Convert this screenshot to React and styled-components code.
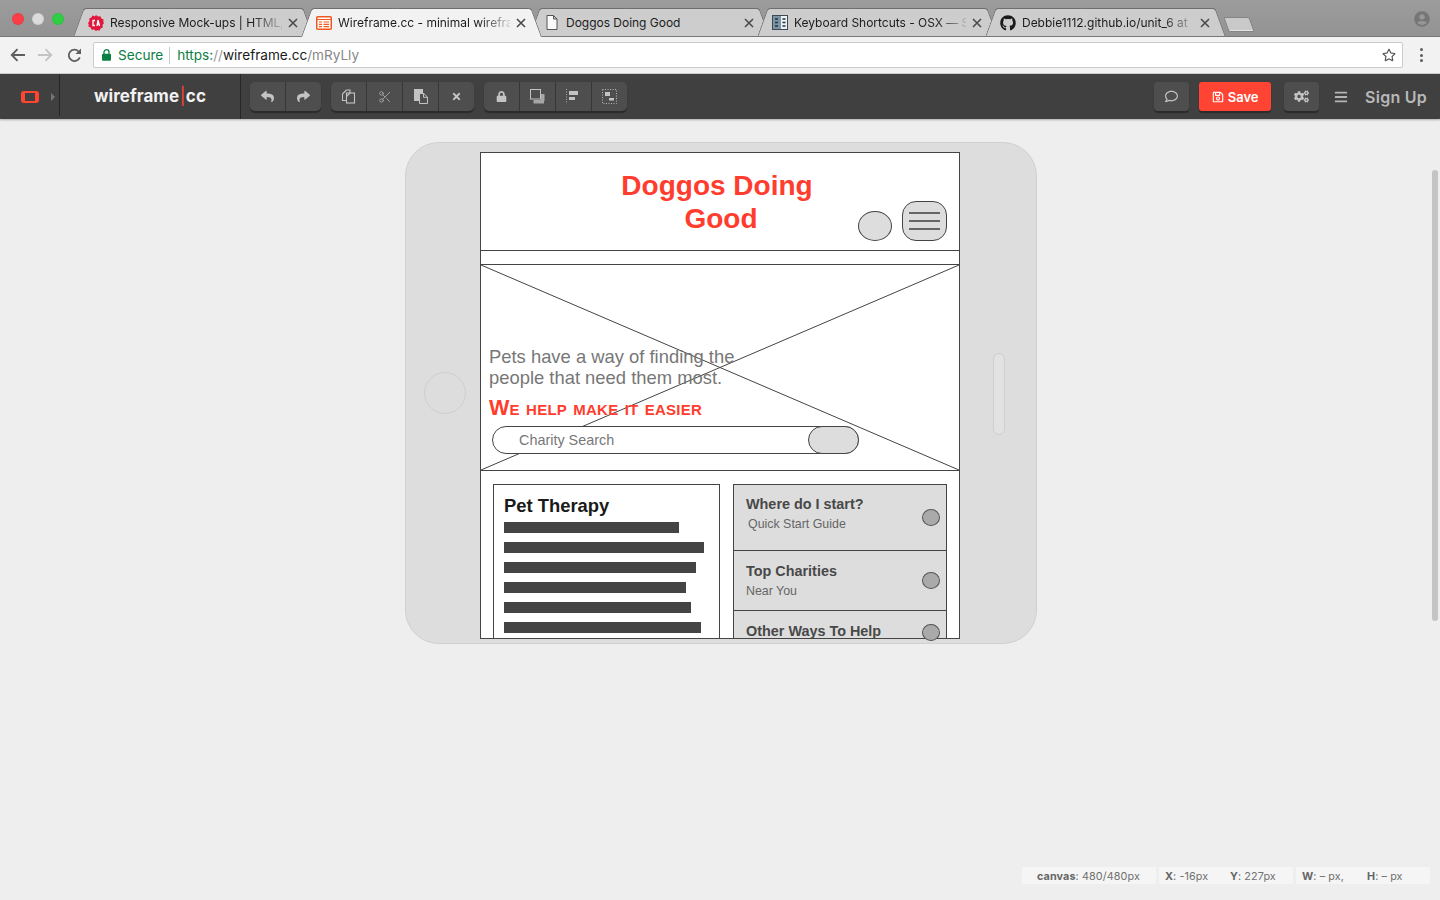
import React from "react";
import styled, { createGlobalStyle } from "styled-components";
import { FaGithub, FaRegSave } from "react-icons/fa";
import {
  FaReply, FaShare, FaTimes, FaLock, FaCogs, FaBars, FaRegComment,
  FaUserCircle, FaRegStar,
} from "react-icons/fa";
import { Scissors } from "lucide-react";

const Global = createGlobalStyle`
  html, body { margin: 0; padding: 0; height: 100%; overflow: hidden; background: #eeeeee; }
  * { box-sizing: border-box; }
`;

const Page = styled.div`
  width: 1440px; height: 900px; display: flex; flex-direction: column; position: relative;
  overflow: hidden; background: #eeeeee; font-family: Inter, "Liberation Sans", sans-serif;
`;

/* ---------- browser tab strip ---------- */
const TabStrip = styled.div`
  height: 37px; flex: none; display: flex; align-items: flex-end; position: relative;
  background: linear-gradient(#9c9c9c, #939393); border-bottom: 1px solid #777;
`;
const Lights = styled.div`
  width: 73px; height: 36px; flex: none; display: flex; gap: 8px; padding: 13px 0 0 12px;
`;
const Light = styled.span`
  width: 12px; height: 12px; border-radius: 50%; background: ${(p) => p.$c};
  box-shadow: inset 0 0 0 1px rgba(0,0,0,.06);
`;
const Tab = styled.div`
  width: 241px; height: 29px; margin-right: -13px; margin-bottom: -1px; position: relative; flex: none;
  display: flex; align-items: center; padding: 0 14px 0 15px;
  z-index: ${(p) => (p.$active ? 5 : 1)};
  &::before, &::after {
    content: ""; position: absolute; top: 0; bottom: 0; width: 55%; z-index: -1;
    background: ${(p) => (p.$active ? "#f2f2f2" : "#cdcdcd")};
    border-top: 1px solid #6e6e6e;
    border-bottom: ${(p) => (p.$active ? "none" : "1px solid #777")};
  }
  &::before {
    left: 0; transform-origin: bottom left; transform: skewX(-20deg);
    border-left: 1px solid #6e6e6e; border-top-left-radius: 3px;
  }
  &::after {
    right: 0; transform-origin: bottom right; transform: skewX(20deg);
    border-right: 1px solid #6e6e6e; border-top-right-radius: 3px;
  }
`;
const Favicon = styled.span`
  width: 16px; height: 16px; flex: none; display: flex; align-items: center; justify-content: center;
  margin-right: 6px;
  svg { display: block; }
`;
const TabTitle = styled.span`
  flex: 1; min-width: 0; white-space: nowrap; font-size: 12px; line-height: 16px;
  color: #1c1c1c; letter-spacing: -.02px;
  mask-image: ${(p) => (p.$fade ? "linear-gradient(90deg, #000 82%, rgba(0,0,0,.15) 100%)" : "none")};
`;
const TabClose = styled.span`
  width: 14px; height: 14px; flex: none; margin-left: 4px; color: #4a4a4a;
  display: flex; align-items: center; justify-content: center;
`;
const NewTab = styled.div`
  width: 26px; height: 15px; margin: 0 0 4px 13px; flex: none; background: #c9c9c9;
  border: 1px solid #858585; border-radius: 2px; transform: skewX(20deg); box-shadow: inset 0 -1px 0 #e4e4e4;
`;
const Profile = styled.div`
  position: absolute; right: 10px; top: 11px; color: #767676; display: flex;
`;

/* ---------- address bar ---------- */
const AddressRow = styled.div`
  height: 37px; flex: none; display: flex; align-items: center; background: #f2f2f2; padding-left: 9px;
  border-bottom: 1px solid #d0d0d0;
`;
const NavButton = styled.span`
  width: 18px; height: 18px; display: flex; align-items: center; justify-content: center;
  margin-right: ${(p) => p.$mr || 10}px; color: ${(p) => (p.$off ? "#c4c4c4" : "#5e5e5e")};
`;
const Omnibox = styled.div`
  width: 1310px; height: 26px; margin-left: -4px; background: #fff; border: 1px solid #cbcbcb; border-radius: 2px;
  display: flex; align-items: center; padding: 0 6px 0 8px; font-size: 13.6px; line-height: 17px; letter-spacing: -.01px;
`;
const Secure = styled.span` color: #0b8043; margin-left: 7px; padding-right: 6px; border-right: 1px solid #c8c8c8; `;
const Url = styled.span` margin-left: 7px; color: #888; white-space: nowrap; `;
const UrlScheme = styled.span` color: #0b8043; `;
const UrlSlash = styled.span` color: #9a9a9a; `;
const UrlHost = styled.span` color: #1a1a1a; `;
const StarSlot = styled.span` margin-left: auto; color: #555; display: flex; `;
const Kebab = styled.div`
  margin-left: 17px; display: flex; flex-direction: column; gap: 2.5px;
  span { width: 3px; height: 3px; border-radius: 50%; background: #5e5e5e; }
`;

/* ---------- app toolbar ---------- */
const Toolbar = styled.div`
  height: 45px; flex: none; display: flex; align-items: center; background: #404040;
  box-shadow: 0 1px 2px rgba(0,0,0,.28); color: #ccc; position: relative;
`;
const DeviceCell = styled.div`
  width: 60px; height: 42px; align-self: flex-start; flex: none; display: flex; align-items: center; padding: 3px 0 0 21px; gap: 12px;
  border-right: 1px solid #262626;
`;
const Caret = styled.span`
  width: 0; height: 0; border-left: 4px solid #777; border-top: 4px solid transparent; border-bottom: 4px solid transparent;
`;
const LogoCell = styled.div`
  width: 181px; height: 45px; flex: none; display: flex; align-items: center; padding: 0 0 1px 34px;
  border-right: 1px solid #262626; font-size: 17px; font-weight: 700; color: #f1f1f1; letter-spacing: .05px;
`;
const LogoBar = styled.span` color: #ff4530; font-weight: 400; margin: 0 .5px; `;
const Group = styled.div`
  display: flex; height: 29px; margin-left: ${(p) => p.$ml}px; border-radius: 5px; background: #4e4e4e;
  box-shadow: 0 2px 1px #2b2b2b; overflow: hidden;
`;
const ToolButton = styled.div`
  width: 36px; display: flex; align-items: center; justify-content: center; color: #c3c3c3;
  border-left: 1px solid #373737;
  &:first-child { border-left: none; width: 35px; }
`;
const RightTools = styled.div` margin-left: auto; display: flex; align-items: center; `;
const SoloButton = styled.div`
  width: 35px; height: 29px; border-radius: 4px; background: #4e4e4e; box-shadow: 0 2px 1px #2b2b2b;
  display: flex; align-items: center; justify-content: center; color: #c3c3c3;
`;
const SaveButton = styled.div`
  width: 72px; height: 29px; margin: 0 13px 0 10px; border-radius: 3px; background: #ff4433; color: #fff; font-size: 13px;
  font-weight: 600; display: flex; align-items: center; justify-content: center; gap: 4px; box-shadow: 0 2px 1px #2b2b2b;
`;
const MenuSlot = styled.span` margin-left: 15px; color: #b4b4b4; display: flex; `;
const SignUp = styled.span` margin: 0 13px 0 17px; font-size: 16px; font-weight: 600; color: #b8b8b8; letter-spacing: .25px; `;

/* ---------- workspace ---------- */
const Workspace = styled.div` flex: 1; min-height: 0; display: flex; flex-direction: column; padding: 23px 10px 16px 405px; `;
const Phone = styled.div`
  width: 632px; height: 502px; flex: none; position: relative; background: #dddddd; border: 1px solid #d0d0d0;
  border-radius: 34px; padding: 9px 0 0 74px;
`;
const HomeButton = styled.div`
  position: absolute; left: 18px; top: 229px; width: 42px; height: 42px; border-radius: 50%; border: 1px solid #cfcfcf;
`;
const SidePill = styled.div`
  position: absolute; left: 587px; top: 210px; width: 12px; height: 82px; border-radius: 6px; border: 1px solid #cfcfcf; background: #e2e2e2;
`;
const Canvas = styled.div` width: 480px; height: 487px; position: relative; `;
const Clip = styled.div`
  width: 480px; height: 487px; background: #fff; border: 1px solid #444; overflow: hidden; display: flex; flex-direction: column;
  font-family: "Liberation Sans", Arial, sans-serif;
`;
const Header = styled.div` height: 98px; flex: none; border-bottom: 1px solid #444; position: relative; display: flex; justify-content: flex-end; align-items: flex-end; padding: 0 12px 9px 0; gap: 10px; `;
const Title = styled.h1`
  position: absolute; left: 116px; top: 17px; width: 240px; margin: 0; font-size: 28px; line-height: 32.5px; font-weight: 700; color: #ff3d2e; text-align: center;
`;
const TitleSecondLine = styled.span` display: block; padding-left: 8px; `;
const RoundWidget = styled.div` width: 34px; height: 30px; border-radius: 50%; background: #ddd; border: 1px solid #444; `;
const Burger = styled.div`
  width: 45px; height: 40px; border-radius: 14px; background: #ddd; border: 1px solid #444;
  display: flex; flex-direction: column; align-items: center; justify-content: center; gap: 6px;
  span { width: 31px; height: 2px; background: #666; }
`;
const Hero = styled.div`
  height: 207px; flex: none; margin-top: 13px; border-top: 1px solid #444; border-bottom: 1px solid #444; position: relative;
  display: flex; flex-direction: column; justify-content: flex-end; padding: 0 0 16px 8px;
`;
const CrossLines = styled.svg` position: absolute; inset: 0; width: 100%; height: 100%; `;
const HeroText = styled.p`
  position: relative; width: 275px; margin: 0; font-size: 18.4px; line-height: 21px; color: #777;
`;
const Tagline = styled.div`
  position: relative; margin-top: 7px; font-size: 21.6px; line-height: 26px; font-weight: 700; color: #ff3d2e; font-variant: small-caps; letter-spacing: .24px;
`;
const SearchPill = styled.div`
  position: relative; width: 367px; height: 28px; margin: 5px 0 0 3px; background: #fff; border: 1px solid #444; border-radius: 14px;
  display: flex; align-items: center; justify-content: space-between; padding-left: 26px; font-size: 14.4px; color: #777;
`;
const SearchButton = styled.div` width: 51px; height: 28px; margin: -1px -1px -1px 0; border-radius: 14px; background: #ddd; border: 1px solid #444; `;
const Content = styled.div` display: flex; gap: 13px; padding: 13px 0 0 12px; flex: 1; min-height: 0; `;
const Article = styled.div`
  width: 227px; height: 200px; flex: none; border: 1px solid #444; padding: 10px 10px 0; display: flex; flex-direction: column;
`;
const ArticleTitle = styled.h2` margin: 0 0 5px; font-size: 18.4px; line-height: 22px; font-weight: 700; color: #1a1a1a; `;
const Bars = styled.div` display: flex; flex-direction: column; gap: 9px; `;
const Bar = styled.div` height: 11px; width: ${(p) => p.$w}px; background: #444; flex: none; `;
const Side = styled.div` width: 214px; flex: none; display: flex; flex-direction: column; `;
const Panel = styled.div`
  height: ${(p) => p.$h}px; flex: none; background: #ddd; border: 1px solid #444; margin-top: ${(p) => (p.$first ? 0 : -1)}px;
  position: relative; padding: ${(p) => p.$pt}px 0 0 12px;
`;
const PanelTitle = styled.div` font-size: 14.4px; line-height: 18px; font-weight: 700; color: #484848; `;
const PanelSub = styled.div` margin-top: ${(p) => p.$mt}px; padding-left: ${(p) => p.$pl || 0}px; font-size: 12.4px; line-height: 16px; color: #666; `;
const Dot = styled.div`
  position: absolute; left: 188px; top: ${(p) => p.$top}px; width: 18px; height: 17px; border-radius: 50%; background: #aaa; border: 1px solid #555;
`;
const OverflowDot = styled(Dot)` left: 442px; top: 472px; `;

/* ---------- status ---------- */
const Status = styled.div` margin-top: auto; display: flex; justify-content: flex-end; gap: 3px; `;
const StatusCell = styled.div`
  width: 134px; height: 17px; background: #f5f5f5; display: flex; font-size: 10.8px; line-height: 19px; color: #707070; white-space: nowrap;
  padding-left: ${(p) => p.$pl}px; letter-spacing: .1px;
  b { font-weight: 700; color: #666; }
`;
const StatusPart = styled.span` width: ${(p) => p.$w}px; flex: none; `;
const ScrollThumb = styled.div`
  position: absolute; right: 2px; top: 170px; width: 6px; height: 451px; border-radius: 3px; background: #c4c4c4;
`;

/* ---------- small drawn icons ---------- */
const CloseX = () => (
  <svg width="10" height="10" viewBox="0 0 10 10"><path d="M1 1l8 8M9 1l-8 8" stroke="currentColor" strokeWidth="1.6" /></svg>
);
const MockupFav = () => (
  <svg width="16" height="16" viewBox="0 0 16 16">
    <path d="M8 0l2 1.5 2.4-.3 1 2.2 2.2 1-.3 2.4L16 8l-1.5 2 .3 2.4-2.2 1-1 2.2-2.4-.3L8 16l-2-1.5-2.4.3-1-2.2-2.2-1 .3-2.4L0 8l1.5-2-.3-2.4 2.2-1 1-2.2L6.800 1.500z" fill="#e2173c" />
    <path d="M7 5.500H5v5h2M9 11l1-6 1.500 6M9.300 9h2" fill="none" stroke="#fff" strokeWidth="1.300" />
  </svg>
);
const WireFav = () => (
  <svg width="16" height="14" viewBox="0 0 16 14">
    <rect x=".75" y=".75" width="14.500" height="12.500" rx="1" fill="#fff" stroke="#f1591f" strokeWidth="1.500" />
    <path d="M1 3.500h14M3 6h3M7.500 6H13M3 8.300h3M7.500 8.300H13M3 10.700h3M7.500 10.700H13" stroke="#f1591f" strokeWidth="1.200" />
  </svg>
);
const DocFav = () => (
  <svg width="12" height="15" viewBox="0 0 12 15"><path d="M1 .5h6.500L11 4v10.500H1zM7.500.5V4H11" fill="#fafafa" stroke="#555" /></svg>
);
const KeysFav = () => (
  <svg width="16" height="15" viewBox="0 0 16 15">
    <rect x=".5" y=".5" width="15" height="14" fill="#7c95a6" stroke="#3b4a55" />
    <rect x="9" y="1" width="6" height="13" fill="#eef2f4" />
    <path d="M3 4h3M3 7.500h3M3 11h3M10.500 4h3M10.500 7.500h3M10.500 11h3" stroke="#23343f" strokeWidth="1.300" />
  </svg>
);
const BackArrow = ({ flip }) => (
  <svg width="16" height="14" viewBox="0 0 16 14" style={flip ? { transform: "scaleX(-1)" } : undefined}>
    <path d="M15 7H2M7.500 1.200L1.800 7l5.700 5.800" fill="none" stroke="currentColor" strokeWidth="1.900" />
  </svg>
);
const Reload = () => (
  <svg width="15" height="15" viewBox="0 0 15 15">
    <path d="M12.800 9.400A5.700 5.700 0 1 1 11.500 3.300" fill="none" stroke="currentColor" strokeWidth="1.800" />
    <path d="M14 0.500V6H8.500z" fill="currentColor" />
  </svg>
);
const PadLock = () => (
  <svg width="9" height="12" viewBox="0 0 9 12"><path d="M2 5V3.200a2.500 2.500 0 0 1 5 0V5" fill="none" stroke="#0b8043" strokeWidth="1.300" /><rect y="4.800" width="9" height="7" rx="1" fill="#0b8043" /></svg>
);
const DeviceIcon = () => (
  <svg width="18" height="12" viewBox="0 0 18 12">
    <rect x="1" y="1" width="16" height="10" rx="2" fill="none" stroke="#ff4530" strokeWidth="2" />
    <rect x="1" y="1" width="3" height="10" fill="#ff4530" /><rect x="14" y="1" width="3" height="10" fill="#ff4530" />
  </svg>
);
const CopyIcon = () => (
  <svg width="15" height="15" viewBox="0 0 15 15" fill="none" stroke="currentColor" strokeWidth="1.100">
    <path d="M5.500 1L1.500 5v6.500h4" /><path d="M5.500 1h3.500v3" /><rect x="5.500" y="4" width="8" height="10" fill="#4e4e4e" /><path d="M5.500 7.500L9 4" />
  </svg>
);
const PasteIcon = () => (
  <svg width="14" height="15" viewBox="0 0 14 15">
    <rect x="0" y="0" width="9" height="12" fill="#c3c3c3" />
    <path d="M5.500 4.500h4.300l3.700 3.700v6.300h-8z" fill="#4e4e4e" stroke="#c3c3c3" />
    <path d="M9.500 4.500v3.800h4" fill="none" stroke="#c3c3c3" />
  </svg>
);
const ArrangeIcon = () => (
  <svg width="15" height="15" viewBox="0 0 15 15" fill="none">
    <path d="M5 11H14V14.500H3.500V11z M11 5h3.500v7H11z" fill="#a6a6a6" /><rect x=".5" y=".5" width="10" height="9.500" stroke="#c3c3c3" fill="#4e4e4e" />
  </svg>
);
const AlignIcon = () => (
  <svg width="15" height="15" viewBox="0 0 15 15">
    <path d="M.500 0v15" stroke="#aaa" strokeDasharray="1 1.500" /><rect x="3" y="2" width="9" height="4" fill="#c3c3c3" /><rect x="3" y="8" width="6" height="3" fill="#c3c3c3" />
  </svg>
);
const GroupIcon = () => (
  <svg width="15" height="15" viewBox="0 0 15 15">
    <rect x=".5" y=".5" width="14" height="14" fill="none" stroke="#b5b5b5" strokeDasharray="1 1.500" /><rect x="3" y="3" width="5" height="4" fill="#c3c3c3" /><rect x="7" y="9" width="5" height="2.500" fill="#c3c3c3" />
  </svg>
);

const tabs = [
  { title: "Responsive Mock-ups | HTML,", icon: <MockupFav />, fade: true },
  { title: "Wireframe.cc - minimal wirefra", icon: <WireFav />, active: true, fade: true },
  { title: "Doggos Doing Good", icon: <DocFav /> },
  { title: "Keyboard Shortcuts - OSX — S", icon: <KeysFav />, fade: true },
  { title: "Debbie1112.github.io/unit_6 at", icon: <FaGithub size={16} color="#1b1b1b" />, fade: true },
];
const barWidths = [175, 200, 192, 182, 187, 197, 190];

export default function App() {
  return (
    <Page>
      <Global />
      <TabStrip>
        <Lights>
          <Light $c="#fb3f48" />
          <Light $c="#dcdcdc" />
          <Light $c="#2fce44" />
        </Lights>
        {tabs.map((t) => (
          <Tab key={t.title} $active={t.active}>
            <Favicon>{t.icon}</Favicon>
            <TabTitle $fade={t.fade}>{t.title}</TabTitle>
            <TabClose><CloseX /></TabClose>
          </Tab>
        ))}
        <NewTab />
        <Profile><FaUserCircle size={16} /></Profile>
      </TabStrip>

      <AddressRow>
        <NavButton $mr={9}><BackArrow /></NavButton>
        <NavButton $off $mr={11}><BackArrow flip /></NavButton>
        <NavButton $mr={14}><Reload /></NavButton>
        <Omnibox>
          <PadLock />
          <Secure>Secure</Secure>
          <Url>
            <UrlScheme>https:</UrlScheme><UrlSlash>//</UrlSlash><UrlHost>wireframe.cc</UrlHost>/mRyLly
          </Url>
          <StarSlot><FaRegStar size={14} /></StarSlot>
        </Omnibox>
        <Kebab><span /><span /><span /></Kebab>
      </AddressRow>

      <Toolbar>
        <DeviceCell><DeviceIcon /><Caret /></DeviceCell>
        <LogoCell>wireframe<LogoBar>|</LogoBar>cc</LogoCell>
        <Group $ml={9}>
          <ToolButton><FaReply size={13} /></ToolButton>
          <ToolButton><FaShare size={13} /></ToolButton>
        </Group>
        <Group $ml={10}>
          <ToolButton><CopyIcon /></ToolButton>
          <ToolButton><Scissors size={14} strokeWidth={1.5} color="#a8a8a8" /></ToolButton>
          <ToolButton><PasteIcon /></ToolButton>
          <ToolButton><FaTimes size={11} /></ToolButton>
        </Group>
        <Group $ml={10}>
          <ToolButton><FaLock size={11} /></ToolButton>
          <ToolButton><ArrangeIcon /></ToolButton>
          <ToolButton><AlignIcon /></ToolButton>
          <ToolButton><GroupIcon /></ToolButton>
        </Group>
        <RightTools>
          <SoloButton><FaRegComment size={13} /></SoloButton>
          <SaveButton><FaRegSave size={12} />Save</SaveButton>
          <SoloButton><FaCogs size={15} /></SoloButton>
          <MenuSlot><FaBars size={14} /></MenuSlot>
          <SignUp>Sign Up</SignUp>
        </RightTools>
      </Toolbar>

      <Workspace>
        <Phone>
          <HomeButton />
          <SidePill />
          <Canvas>
            <Clip>
              <Header>
                <Title>Doggos Doing<TitleSecondLine>Good</TitleSecondLine></Title>
                <RoundWidget />
                <Burger><span /><span /><span /></Burger>
              </Header>
              <Hero>
                <CrossLines viewBox="0 0 478 205" preserveAspectRatio="none">
                  <path d="M0 0L478 205M478 0L0 205" stroke="#444" strokeWidth="1" fill="none" />
                </CrossLines>
                <HeroText>Pets have a way of finding the people that need them most.</HeroText>
                <Tagline>We help make it easier</Tagline>
                <SearchPill>Charity Search<SearchButton /></SearchPill>
              </Hero>
              <Content>
                <Article>
                  <ArticleTitle>Pet Therapy</ArticleTitle>
                  <Bars>{barWidths.map((w, i) => <Bar key={i} $w={w} />)}</Bars>
                </Article>
                <Side>
                  <Panel $first $h={67} $pt={10}>
                    <PanelTitle>Where do I start?</PanelTitle>
                    <PanelSub $mt={3} $pl={2}>Quick Start Guide</PanelSub>
                    <Dot $top={24} />
                  </Panel>
                  <Panel $h={61} $pt={11}>
                    <PanelTitle>Top Charities</PanelTitle>
                    <PanelSub $mt={3}>Near You</PanelSub>
                    <Dot $top={21} />
                  </Panel>
                  <Panel $h={60} $pt={11}>
                    <PanelTitle>Other Ways To Help</PanelTitle>
                  </Panel>
                </Side>
              </Content>
            </Clip>
            <OverflowDot />
          </Canvas>
        </Phone>
        <Status>
          <StatusCell $pl={15}><span><b>canvas</b>: 480/480px</span></StatusCell>
          <StatusCell $pl={6}><StatusPart $w={65}><b>X</b>: -16px</StatusPart><span><b>Y</b>: 227px</span></StatusCell>
          <StatusCell $pl={6}><StatusPart $w={65}><b>W</b>: – px,</StatusPart><span><b>H</b>: – px</span></StatusCell>
        </Status>
      </Workspace>
      <ScrollThumb />
    </Page>
  );
}
